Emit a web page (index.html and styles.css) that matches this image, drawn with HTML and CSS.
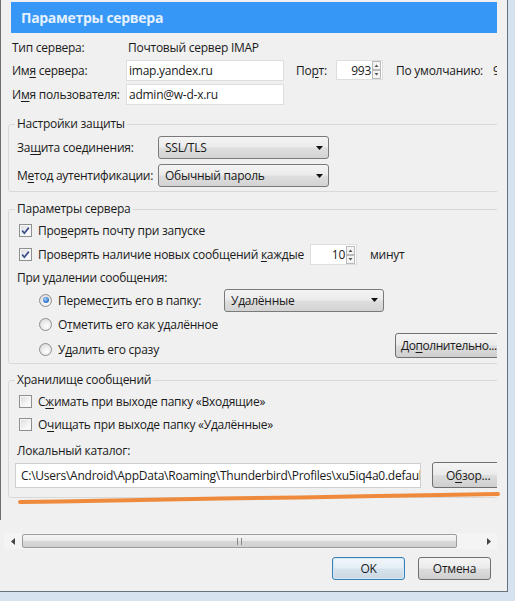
FILE: index.html
```html
<!DOCTYPE html>
<html lang="ru">
<head>
<meta charset="utf-8">
<title>Параметры сервера</title>
<link rel="stylesheet" href="styles.css">
</head>
<body>
<div class="client">
  <div class="pane">
    <div class="content">
      <div class="title">Параметры сервера</div>
      <div class="info">
        <div class="row r1"><span class="lbl">Тип сервера:</span><span class="val">Почтовый сервер IMAP</span></div>
        <div class="row r2">
          <span class="lbl">Им<u>я</u> сервера:</span>
          <span class="field host">imap.yandex.ru</span>
          <span class="port-lbl">По<u>р</u>т:</span>
          <span class="spin port"><span class="num">993</span><svg class="spinner" width="9" height="18" viewBox="0 0 9 18"><rect x="0.5" y="0.5" width="8" height="8" fill="#f4f4f4" stroke="#b9b9b9"/><rect x="0.5" y="9.5" width="8" height="8" fill="#f4f4f4" stroke="#b9b9b9"/><path d="M2.5 6 L4.5 3.5 L6.5 6 Z" fill="#555"/><path d="M2.5 12 L4.5 14.5 L6.5 12 Z" fill="#555"/></svg></span>
          <span class="def">По умолчанию:</span><span class="defval">993</span>
        </div>
        <div class="row r3">
          <span class="lbl">И<u>м</u>я пользователя:</span>
          <span class="field host">admin@w-d-x.ru</span>
        </div>
      </div>

      <fieldset class="group g1">
        <legend>Настройки защиты</legend>
        <div class="row grow">
          <span class="glbl">За<u>щ</u>ита соединения:</span>
          <span class="select s1"><span class="stext">SSL/TLS</span><svg class="tri" width="7" height="4" viewBox="0 0 7 4"><path d="M0 0 H7 L3.5 4 Z" fill="#111"/></svg></span>
        </div>
        <div class="row grow gap3">
          <span class="glbl">М<u>е</u>тод аутентификации:</span>
          <span class="select s1"><span class="stext">Обычный пароль</span><svg class="tri" width="7" height="4" viewBox="0 0 7 4"><path d="M0 0 H7 L3.5 4 Z" fill="#111"/></svg></span>
        </div>
      </fieldset>

      <fieldset class="group g2">
        <legend>Параметры сервера</legend>
        <div class="row cbrow h24">
          <span class="cb"><svg width="11" height="11" viewBox="0 0 11 11"><path d="M2.2 5.6 L4.4 8.2 L8.8 2.6" fill="none" stroke="#3b4e8c" stroke-width="1.7"/></svg></span>
          <span>Про<u>в</u>ерять почту при запуске</span>
        </div>
        <div class="row cbrow h25">
          <span class="cb"><svg width="11" height="11" viewBox="0 0 11 11"><path d="M2.2 5.6 L4.4 8.2 L8.8 2.6" fill="none" stroke="#3b4e8c" stroke-width="1.7"/></svg></span>
          <span class="every">Проверять наличие новых сообщений <u>к</u>аждые</span>
          <span class="spin minutes"><span class="num">10</span><svg class="spinner" width="9" height="18" viewBox="0 0 9 18"><rect x="0.5" y="0.5" width="8" height="8" fill="#f4f4f4" stroke="#b9b9b9"/><rect x="0.5" y="9.5" width="8" height="8" fill="#f4f4f4" stroke="#b9b9b9"/><path d="M2.5 6 L4.5 3.5 L6.5 6 Z" fill="#555"/><path d="M2.5 12 L4.5 14.5 L6.5 12 Z" fill="#555"/></svg></span>
          <span class="unit">минут</span>
        </div>
        <div class="row textrow h21">При удалении сообщения:</div>
        <div class="row rbrow h24">
          <span class="rb on"><span class="dot"></span></span>
          <span class="rlbl">Перемес<u>т</u>ить его в папку:</span>
          <span class="select s2"><span class="stext">Удалённые</span><svg class="tri" width="7" height="4" viewBox="0 0 7 4"><path d="M0 0 H7 L3.5 4 Z" fill="#111"/></svg></span>
        </div>
        <div class="row rbrow h25">
          <span class="rb"></span>
          <span>О<u>т</u>метить его как удалённое</span>
        </div>
        <div class="row rbrow h25">
          <span class="rb"></span>
          <span>У<u>д</u>алить его сразу</span>
          <span class="btn more">До<u>п</u>олнительно...</span>
        </div>
      </fieldset>

      <fieldset class="group g3">
        <legend>Хранилище сообщений</legend>
        <div class="row cbrow h23">
          <span class="cb"></span>
          <span>С<u>ж</u>имать при выходе папку «Входящие»</span>
        </div>
        <div class="row cbrow h22">
          <span class="cb"></span>
          <span>О<u>ч</u>ищать при выходе папку «Удалённые»</span>
        </div>
        <div class="row textrow h20 mt5">Локальный каталог:</div>
        <div class="row pathrow">
          <span class="field path">C:\Users\Android\AppData\Roaming\Thunderbird\Profiles\xu5iq4a0.default</span>
          <span class="btn browse">О<u>б</u>зор...</span>
        </div>
      </fieldset>
    </div>
  </div>

  <div class="hscroll">
    <span class="arrow"><svg width="4" height="7" viewBox="0 0 4 7"><path d="M4 0 V7 L0 3.5 Z" fill="#444"/></svg></span>
    <span class="thumb"><span class="grip"></span></span>
    <span class="track"></span>
    <span class="arrow"><svg width="4" height="7" viewBox="0 0 4 7"><path d="M0 0 V7 L4 3.5 Z" fill="#444"/></svg></span>
  </div>

  <div class="actions">
    <span class="btn dlg ok">OK</span>
    <span class="btn dlg">Отмена</span>
  </div>

  <svg class="mark" width="508" height="520" viewBox="0 0 508 520"><path d="M20 502 L60 501.5 L140 500 L220 498.5 L300 497.5 L377 496 L440 495 L498 494" fill="none" stroke="#ef8a3c" stroke-width="4" stroke-linecap="round" stroke-linejoin="round"/></svg>
</div>
</body>
</html>
```

FILE: styles.css
```css
* { box-sizing: border-box; }
html, body { margin: 0; padding: 0; }
body {
  width: 515px;
  height: 601px;
  overflow: hidden;
  background: #d6e2ef;
  font-family: "Open Sans", "Noto Sans", sans-serif;
  font-size: 12px;
  letter-spacing: -0.25px;
  color: #1a1a1a;
}
u { text-decoration: underline; text-underline-offset: 2px; }

.client {
  position: relative;
  width: 508px;
  height: 592px;
  background: #f0f0f0;
  border-right: 1px solid #66717e;
  border-bottom: 1px solid #66717e;
  display: flex;
  flex-direction: column;
}
.pane {
  height: 520px;
  border-left: 1px solid #6f6f6f;
}
.content {
  width: 496px;
  height: 100%;
  overflow: hidden;
  white-space: nowrap;
}

.title {
  margin: 2px 0 0 10px;
  width: 500px;
  height: 31px;
  line-height: 31px;
  padding-left: 10px;
  background: #3797f6;
  color: #e4f1ff;
  font-weight: 700;
  font-size: 14px;
  letter-spacing: -0.3px;
}

.row { display: flex; align-items: center; }
.row > * { flex-shrink: 0; }
.info { padding-left: 11px; }
.r1 { height: 22px; margin-top: 3px; }
.r2, .r3 { height: 24px; }
.lbl { width: 114px; }
.val { padding-left: 2px; }

.field {
  height: 21px;
  line-height: 19px;
  background: #fff;
  border: 1px solid #dedede;
  padding: 0 2px;
  overflow: hidden;
}
.host { width: 158px; }
.port-lbl { margin-left: 12px; width: 40px; }
.spin {
  display: flex;
  align-items: center;
  justify-content: flex-end;
  background: #fff;
  border: 1px solid #dedede;
  padding-right: 1px;
}
.spin .num { margin-right: 1px; }
.port { width: 47px; height: 20px; }
.def { margin-left: 13px; width: 97px; }

.group {
  margin: 10px 0 0 7px;
  width: 505px;
  min-width: 0;
  padding: 0;
  border: 1px solid #d9d9d9;
  border-radius: 3px;
}
.group legend {
  margin-left: 6px;
  padding: 0 2px;
  line-height: 16px;
}
.g1 { padding: 3px 0 3px 0; }
.grow { height: 25px; padding-left: 8px; }
.gap3 { margin-top: 3px; }
.glbl { width: 141px; }

.select {
  display: flex;
  align-items: center;
  height: 23px;
  border: 1px solid #7a7a7a;
  border-radius: 3px;
  background: linear-gradient(#f4f4f4 0%, #ebebeb 48%, #dedede 52%, #d3d3d3 100%);
  padding-left: 6px;
}
.select .stext { flex: 1; }
.select .tri { margin-right: 5px; }
.s1 { width: 171px; }
.s2 { width: 160px; }

.g2 { margin-top: 9px; padding: 1px 0 1px 0; }
.h20 { height: 20px; }
.h21 { height: 21px; }
.h22 { height: 22px; }
.h23 { height: 23px; }
.h24 { height: 24px; }
.h25 { height: 25px; }
.mt5 { margin-top: 5px; }

.cbrow { padding-left: 10px; }
.cb {
  width: 13px;
  height: 13px;
  margin-right: 6px;
  border: 1px solid #8e8f8f;
  background: linear-gradient(135deg, #d9dadc 0%, #f4f4f4 60%, #ffffff 100%);
  box-shadow: inset 0 0 0 1px #f6f6f6;
  display: flex;
  align-items: center;
  justify-content: center;
}
.every { width: 272px; }
.minutes { width: 47px; height: 21px; }
.unit { margin-left: 13px; }
.textrow { padding-left: 8px; }

.rbrow { padding-left: 30px; }
.rb {
  width: 13px;
  height: 13px;
  margin-right: 6px;
  border-radius: 50%;
  border: 1px solid #8e8f8f;
  background: radial-gradient(circle at 60% 65%, #ffffff 0%, #ececec 45%, #cfcfcf 100%);
  display: flex;
  align-items: center;
  justify-content: center;
}
.rb .dot {
  width: 6px;
  height: 6px;
  border-radius: 50%;
  background: radial-gradient(circle at 40% 35%, #a8d2fb 0%, #3d7fd4 55%, #1b4f9a 100%);
}
.rlbl { width: 166px; }

.btn {
  display: flex;
  align-items: center;
  border: 1px solid #707070;
  border-radius: 3px;
  background: linear-gradient(#f4f4f4 0%, #ebebeb 48%, #dddddd 52%, #cfcfcf 100%);
}
.more {
  margin-left: auto;
  margin-right: 7px;
  align-self: flex-start;
  margin-top: -4px;
  width: 110px;
  height: 25px;
  padding-left: 5px;
  letter-spacing: -0.45px;
}

.g3 { margin-top: 8px; padding: 2px 0 9px 0; }
.pathrow { margin-top: 2px; height: 26px; padding-left: 6px; }
.path { width: 406px; height: 25px; line-height: 23px; border-color: #cfcfcf; padding-left: 5px; }
.browse { margin-left: 11px; width: 80px; height: 26px; padding-left: 13px; }

.hscroll {
  display: flex;
  margin: 13px 0 0 4px;
  width: 493px;
  height: 16px;
  background: #f4f4f4;
}
.arrow {
  display: flex;
  align-items: center;
  justify-content: center;
  width: 18px;
  flex: none;
}
.hscroll .arrow:last-child { width: 17px; }
.thumb {
  width: 435px;
  flex: none;
  margin: 1px 0;
  border: 1px solid #9c9c9c;
  border-radius: 2px;
  background: linear-gradient(#f6f6f6 0%, #e9e9e9 50%, #d9d9d9 51%, #d0d0d0 100%);
  display: flex;
  align-items: center;
  justify-content: center;
}
.grip {
  width: 5px;
  height: 7px;
  border-left: 1px solid #888;
  border-right: 1px solid #888;
}
.track { flex: 1; }

.actions {
  display: flex;
  justify-content: flex-end;
  gap: 13px;
  margin-top: 8px;
  padding-right: 16px;
}
.dlg {
  width: 73px;
  height: 23px;
  justify-content: center;
}
.ok {
  border-color: #3c7fb1;
  box-shadow: inset 0 0 0 1px #cfe9fb;
  background: linear-gradient(#f1f6fa 0%, #e5eef5 48%, #d6e2ec 52%, #cbd8e3 100%);
}

.mark {
  position: absolute;
  left: 0;
  top: 0;
  pointer-events: none;
}
```
